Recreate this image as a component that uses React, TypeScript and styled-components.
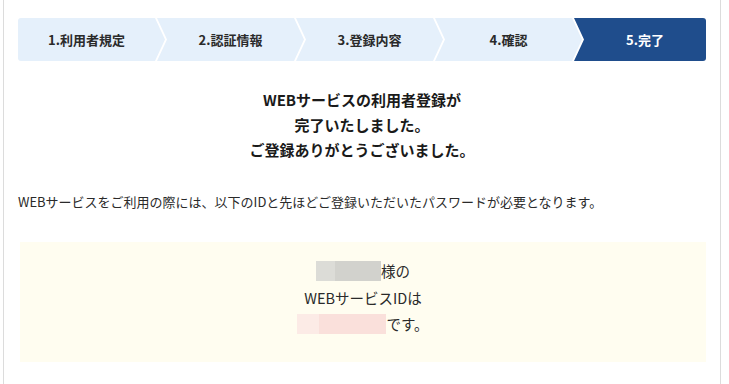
import styled, { createGlobalStyle } from "styled-components";

const GlobalStyle = createGlobalStyle`
  html, body {
    margin: 0;
    padding: 0;
    background: #ffffff;
  }
  body {
    font-family: "Noto Sans CJK JP", "Liberation Sans", sans-serif;
    color: #222222;
  }
`;

const STEPS = ["1.利用者規定", "2.認証情報", "3.登録内容", "4.確認", "5.完了"];
const CURRENT = 4;

const App = () => {
  return (
    <>
      <GlobalStyle />
      <Panel>
        <Stepper>
          {STEPS.map((label, i) => (
            <Step
              key={label}
              $active={i === CURRENT}
              $first={i === 0}
              $last={i === STEPS.length - 1}
            >
              {label}
            </Step>
          ))}
        </Stepper>

        <Heading>
          WEBサービスの利用者登録が
          <br />
          完了いたしました。
          <br />
          ご登録ありがとうございました。
        </Heading>

        <Note>
          WEBサービスをご利用の際には、以下のIDと先ほどご登録いただいたパスワードが必要となります。
        </Note>

        <IdBox>
          <IdLine>
            <Masked $tone="grey" $w={65} />
            様の
          </IdLine>
          <IdLine>WEBサービスIDは</IdLine>
          <IdLine>
            <Masked $tone="pink" $w={89} />
            です。
          </IdLine>
        </IdBox>
      </Panel>
    </>
  );
};

const Panel = styled.div`
  margin-left: 3px;
  width: 718px;
  min-height: 384px;
  box-sizing: border-box;
  border-left: 1px solid #dcdcdc;
  border-right: 1px solid #dcdcdc;
  padding: 18px 14px 0 14px;
`;

const Stepper = styled.div`
  display: flex;
  height: 43px;
`;

const Step = styled.div<{ $active: boolean; $first: boolean; $last: boolean }>`
  display: flex;
  align-items: center;
  justify-content: center;
  box-sizing: border-box;
  width: ${({ $last }) => ($last ? "auto" : "147px")};
  flex: ${({ $last }) => ($last ? "1" : "none")};
  margin-left: ${({ $first }) => ($first ? "0" : "-8px")};
  padding-left: ${({ $first }) => ($first ? "0" : "10px")};
  padding-right: ${({ $last }) => ($last ? "0" : "10px")};
  background: ${({ $active }) => ($active ? "#1f4d8c" : "#e5f0fb")};
  color: ${({ $active }) => ($active ? "#ffffff" : "#2a2a2a")};
  font-size: 13px;
  font-weight: 700;
  border-radius: ${({ $first, $last }) =>
    $first ? "3px 0 0 3px" : $last ? "0 3px 3px 0" : "0"};
  clip-path: ${({ $first, $last }) => {
    const notch = $first ? "" : ", 10px 50%";
    const right = $last
      ? "100% 0, 100% 100%"
      : "calc(100% - 10px) 0, 100% 50%, calc(100% - 10px) 100%";
    return `polygon(0 0, ${right}, 0 100%${notch})`;
  }};
`;

const Heading = styled.h1`
  margin: 26px 0 0 0;
  text-align: center;
  font-size: 15px;
  font-weight: 700;
  line-height: 25px;
  color: #1a1a1a;
`;

const Note = styled.p`
  margin: 30px 0 0 0;
  font-size: 13px;
  line-height: 20px;
  color: #2a2a2a;
`;

const IdBox = styled.div`
  margin: 30px 0 0 2px;
  background: #fffdf0;
  padding: 16px 0 24px 0;
  text-align: center;
  font-size: 14.5px;
  line-height: 26.5px;
  color: #2a2a2a;
`;

const IdLine = styled.div`
  display: flex;
  align-items: center;
  justify-content: center;
`;

const Masked = styled.span<{ $tone: "grey" | "pink"; $w: number }>`
  display: inline-block;
  width: ${({ $w }) => $w}px;
  height: 20px;
  background: ${({ $tone }) =>
    $tone === "grey"
      ? "linear-gradient(90deg, #dcdcd7 0%, #dcdcd7 30%, #d2d2cd 30%, #d2d2cd 100%)"
      : "linear-gradient(90deg, #fcebe6 0%, #fcebe6 25%, #fae0db 25%, #fae0db 100%)"};
`;

export default App;
